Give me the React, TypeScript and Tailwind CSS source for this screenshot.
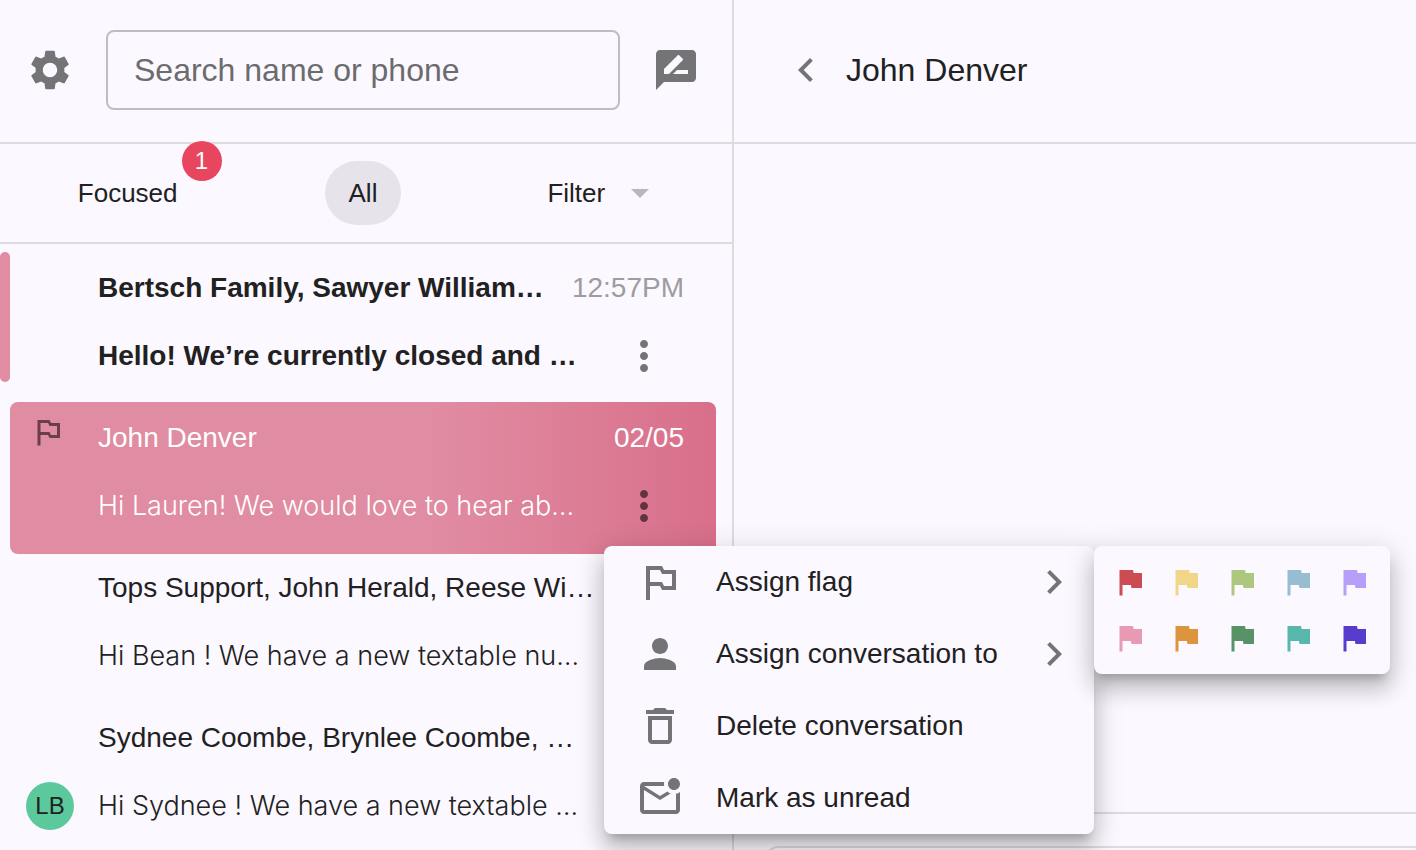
import React from 'react';
import {
    MdChevronLeft,
    MdChevronRight,
    MdDeleteOutline,
    MdFlag,
    MdMoreVert,
    MdOutlinedFlag,
    MdOutlineMarkEmailUnread,
    MdPerson,
    MdRateReview,
} from 'react-icons/md';

interface Conversation {
    name: string;
    preview: string;
    time?: string;
    unread?: boolean;
    selected?: boolean;
    initials?: string;
}

const conversations: Conversation[] = [
    { name: 'Bertsch Family, Sawyer William…', preview: 'Hello! We’re currently closed and …', time: '12:57PM', unread: true },
    { name: 'John Denver', preview: 'Hi Lauren! We would love to hear ab…', time: '02/05', selected: true },
    { name: 'Tops Support, John Herald, Reese Wi…', preview: 'Hi Bean ! We have a new textable nu…' },
    { name: 'Sydnee Coombe, Brynlee Coombe, …', preview: 'Hi Sydnee ! We have a new textable …', initials: 'LB' },
];

const flags = [
    { label: 'Red', color: 'text-[#cc4c53]' },
    { label: 'Yellow', color: 'text-[#f1d588]' },
    { label: 'Light green', color: 'text-[#adc77f]' },
    { label: 'Light blue', color: 'text-[#98bcd2]' },
    { label: 'Lavender', color: 'text-[#b59ff8]' },
    { label: 'Pink', color: 'text-[#e899b3]' },
    { label: 'Orange', color: 'text-[#dc953c]' },
    { label: 'Green', color: 'text-[#589368]' },
    { label: 'Teal', color: 'text-[#5ab7ad]' },
    { label: 'Indigo', color: 'text-[#593ccd]' },
];

const menuItems = [
    { label: 'Assign flag', icon: MdOutlinedFlag, submenu: true },
    { label: 'Assign conversation to', icon: MdPerson, submenu: true },
    { label: 'Delete conversation', icon: MdDeleteOutline, submenu: false },
    { label: 'Mark as unread', icon: MdOutlineMarkEmailUnread, submenu: false },
];

const SettingsIcon = () => (
    <svg viewBox="0 0 24 24" className="size-12" fill="currentColor" aria-hidden="true">
        <path d="M19.14 12.94c.04-.3.06-.61.06-.94 0-.32-.02-.64-.07-.94l2.03-1.58c.18-.14.23-.41.12-.61l-1.92-3.32c-.12-.22-.37-.29-.59-.22l-2.39.96c-.5-.38-1.03-.7-1.62-.94l-.36-2.54c-.04-.24-.24-.41-.48-.41h-3.84c-.24 0-.43.17-.47.41l-.36 2.54c-.59.24-1.13.57-1.62.94l-2.39-.96c-.22-.08-.47 0-.59.22L2.74 8.87c-.12.21-.08.47.12.61l2.03 1.58c-.05.3-.09.63-.09.94s.02.64.07.94l-2.03 1.58c-.18.14-.23.41-.12.61l1.92 3.32c.12.22.37.29.59.22l2.39-.96c.5.38 1.03.7 1.62.94l.36 2.54c.05.24.24.41.48.41h3.84c.24 0 .44-.17.47-.41l.36-2.54c.59-.24 1.13-.56 1.62-.94l2.39.96c.22.08.47 0 .59-.22l1.92-3.32c.12-.22.07-.47-.12-.61l-2.01-1.58zM12 15.6c-1.98 0-3.6-1.62-3.6-3.6s1.62-3.6 3.6-3.6 3.6 1.62 3.6 3.6-1.62 3.6-3.6 3.6z" />
    </svg>
);

const panelClass =
    'absolute rounded-lg bg-[#fbf8ff] shadow-[0_10px_10px_-6px_rgba(0,0,0,0.2),0_16px_20px_2px_rgba(0,0,0,0.14),0_6px_28px_4px_rgba(0,0,0,0.12)]';

const FlagPicker = () => (
    <div className={`${panelClass} left-full top-0 grid w-max grid-cols-5 gap-5 p-[18px]`}>
        {flags.map((flag) => (
            <button key={flag.label} aria-label={flag.label} className={flag.color}>
                <MdFlag className="size-9" />
            </button>
        ))}
    </div>
);

const ConversationMenu = () => (
    <div className={`${panelClass} -left-4 top-16 z-10 w-[490px] text-[#212121]`}>
        {menuItems.map(({ label, icon: Icon, submenu }) => (
            <button key={label} className="flex h-[72px] w-full items-center gap-8 pl-8 pr-4 text-left">
                <Icon className="size-12 text-[#747376]" />
                <span className="flex-1">{label}</span>
                {submenu && <MdChevronRight className="size-12 text-[#747376]" />}
            </button>
        ))}
        <FlagPicker />
    </div>
);

const ConversationRow = ({ conversation }: { conversation: Conversation }) => {
    const { name, preview, time, unread, selected, initials } = conversation;
    return (
        <li className="flex h-[150px] pr-4">
            <div className={`h-[130px] w-[10px] shrink-0 rounded-md ${unread ? 'bg-[#e08ca2]' : ''}`} />
            <div
                className={`flex min-w-0 flex-1 flex-col gap-5 rounded-lg pt-3 ${
                    selected ? 'h-[152px] bg-linear-to-r from-[#e08ca2] from-60% to-[#d96f8a] text-white' : 'text-[#212121]'
                } ${unread ? 'font-bold' : ''}`}
            >
                <div className="flex h-12 pr-8">
                    <div className="w-[88px] shrink-0 pl-5">
                        {selected && <MdOutlinedFlag className="size-9 text-[#6b3f4a]" />}
                    </div>
                    <span className="flex-1 self-center whitespace-nowrap">{name}</span>
                    {time && (
                        <time className={`self-center font-normal ${selected ? '' : 'text-[#9d9ca0]'}`}>{time}</time>
                    )}
                </div>
                <div className="flex h-12 items-center pr-12">
                    <div className="w-[88px] shrink-0 pl-4">
                        {initials && (
                            <div className="flex size-12 items-center justify-center rounded-full bg-[#5cc99d] text-2xl">
                                {initials}
                            </div>
                        )}
                    </div>
                    <span
                        className={`flex-1 whitespace-nowrap ${
                            unread ? '' : "font-['Inter','Liberation_Sans',sans-serif] text-[27px] font-light"
                        }`}
                    >
                        {preview}
                    </span>
                    <div className="relative">
                        <button
                            aria-label={`Options for ${name}`}
                            className={`block ${selected ? 'text-[#633440]' : 'text-[#747376]'}`}
                        >
                            <MdMoreVert className="size-12" />
                        </button>
                        {selected && <ConversationMenu />}
                    </div>
                </div>
            </div>
        </li>
    );
};

const App: React.FC = () => {
    return (
        <div className="flex h-screen overflow-hidden bg-[#fbf8ff] font-['Liberation_Sans',Arial,sans-serif] text-[28px] leading-9 text-[#212121]">
            <aside className="flex w-[734px] shrink-0 flex-col border-r-2 border-[#dddbe0]">
                <header className="flex h-36 shrink-0 items-center gap-8 border-b-2 border-[#dddbe0] pb-0.5 pl-[26px] pr-8 text-[#747376]">
                    <button aria-label="Settings">
                        <SettingsIcon />
                    </button>
                    <input
                        type="text"
                        aria-label="Search name or phone"
                        placeholder="Search name or phone"
                        className="h-20 min-w-0 flex-1 rounded-lg border-2 border-[#bfbdc3] px-[26px] text-[32px] placeholder:text-[#6c6b6e]"
                    />
                    <button aria-label="New message">
                        <MdRateReview className="size-12" />
                    </button>
                </header>

                <nav className="grid h-[100px] shrink-0 grid-cols-3 place-items-center border-b-2 border-[#dddbe0] pl-[10px] pr-4 text-[26px]">
                    <button className="relative h-16 px-6">
                        Focused
                        <span className="absolute -right-5 -top-5 flex size-10 items-center justify-center rounded-full bg-[#e8465e] text-2xl text-white">
                            1
                        </span>
                    </button>
                    <button className="h-16 rounded-full bg-[#e6e4ea] px-6">All</button>
                    <button className="flex h-16 items-center gap-[26px]">
                        Filter
                        <svg viewBox="0 0 18 9" className="h-[9px] w-[18px]" fill="#b9b7bc" aria-hidden="true">
                            <path d="M0 0h18l-9 9z" />
                        </svg>
                    </button>
                </nav>

                <ul className="pt-2">
                    {conversations.map((conversation) => (
                        <ConversationRow key={conversation.name} conversation={conversation} />
                    ))}
                </ul>
            </aside>

            <main className="flex min-w-0 flex-1 flex-col">
                <header className="flex h-36 shrink-0 items-center gap-4 border-b-2 border-[#dddbe0] pb-0.5 pl-12">
                    <button aria-label="Back" className="text-[#747376]">
                        <MdChevronLeft className="size-12" />
                    </button>
                    <h1 className="text-[32px]">John Denver</h1>
                </header>
                <div className="flex-1" />
                <footer className="h-[38px] shrink-0 border-t-2 border-[#dddbe0] pl-8 pt-8">
                    <textarea
                        aria-label="Message"
                        className="block h-20 w-full resize-none rounded-tl-xl border-l-2 border-t-2 border-[#dddbe0]"
                    />
                </footer>
            </main>
        </div>
    );
};

export default App;
